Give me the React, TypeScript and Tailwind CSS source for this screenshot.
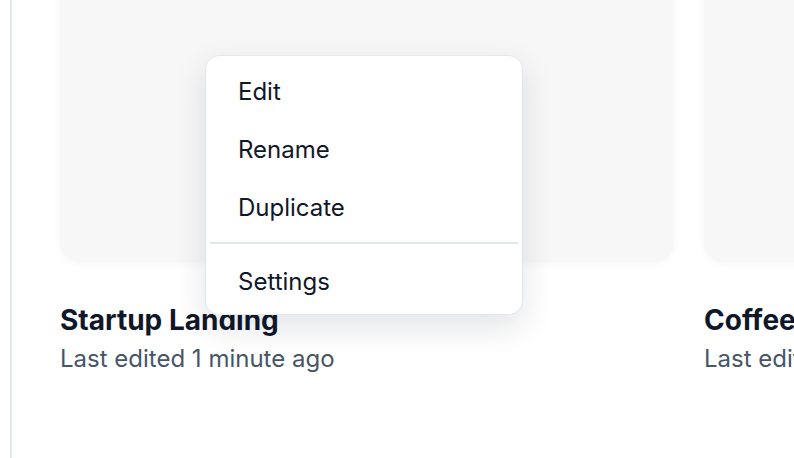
import React from "react";

const font = { fontFamily: "Inter, 'Noto Sans', sans-serif" };

function Card({ title, sub }: { title: string; sub: string }) {
  return (
    <div className="flex w-[614px] shrink-0 flex-col">
      <div className="h-[300px] w-full rounded-[20px] bg-[#f7f7f7] shadow-[0_2px_8px_rgba(0,0,0,0.04)]" />
      <div className="mt-[40px] text-[28px] font-bold leading-[36px] text-[#0f172a]">{title}</div>
      <div className="mt-[5px] whitespace-nowrap text-[24px] leading-[32px] text-[#475569]">{sub}</div>
    </div>
  );
}

export default function App() {
  const items = ["Edit", "Rename", "Duplicate"];
  return (
    <div className="relative h-[458px] w-[794px] overflow-hidden bg-white" style={font}>
      <div className="ml-[10px] flex h-full border-l-2 border-[#e2e8f0] pl-[48px]">
        <div className="-mt-[38px] flex gap-[30px]">
          <Card title="Startup Landing" sub="Last edited 1 minute ago" />
          <Card title="Coffee Shop" sub="Last edited 2 hours ago" />
        </div>
      </div>
      <div className="absolute left-[205px] top-[55px] w-[318px] rounded-[14px] border border-[#e2e8f0] bg-white px-[4px] pb-[3px] pt-[7px] shadow-[0_12px_32px_rgba(15,23,42,0.12)]">
        {items.map((t) => (
          <div key={t} className="flex h-[58px] items-center px-[28px] text-[24px] text-[#0f172a]">
            {t}
          </div>
        ))}
        <div className="mb-[9px] mt-[5px] h-[2px] bg-[#e2e8f0]" />
        <div className="flex h-[58px] items-center px-[28px] text-[24px] text-[#0f172a]">Settings</div>
      </div>
    </div>
  );
}
